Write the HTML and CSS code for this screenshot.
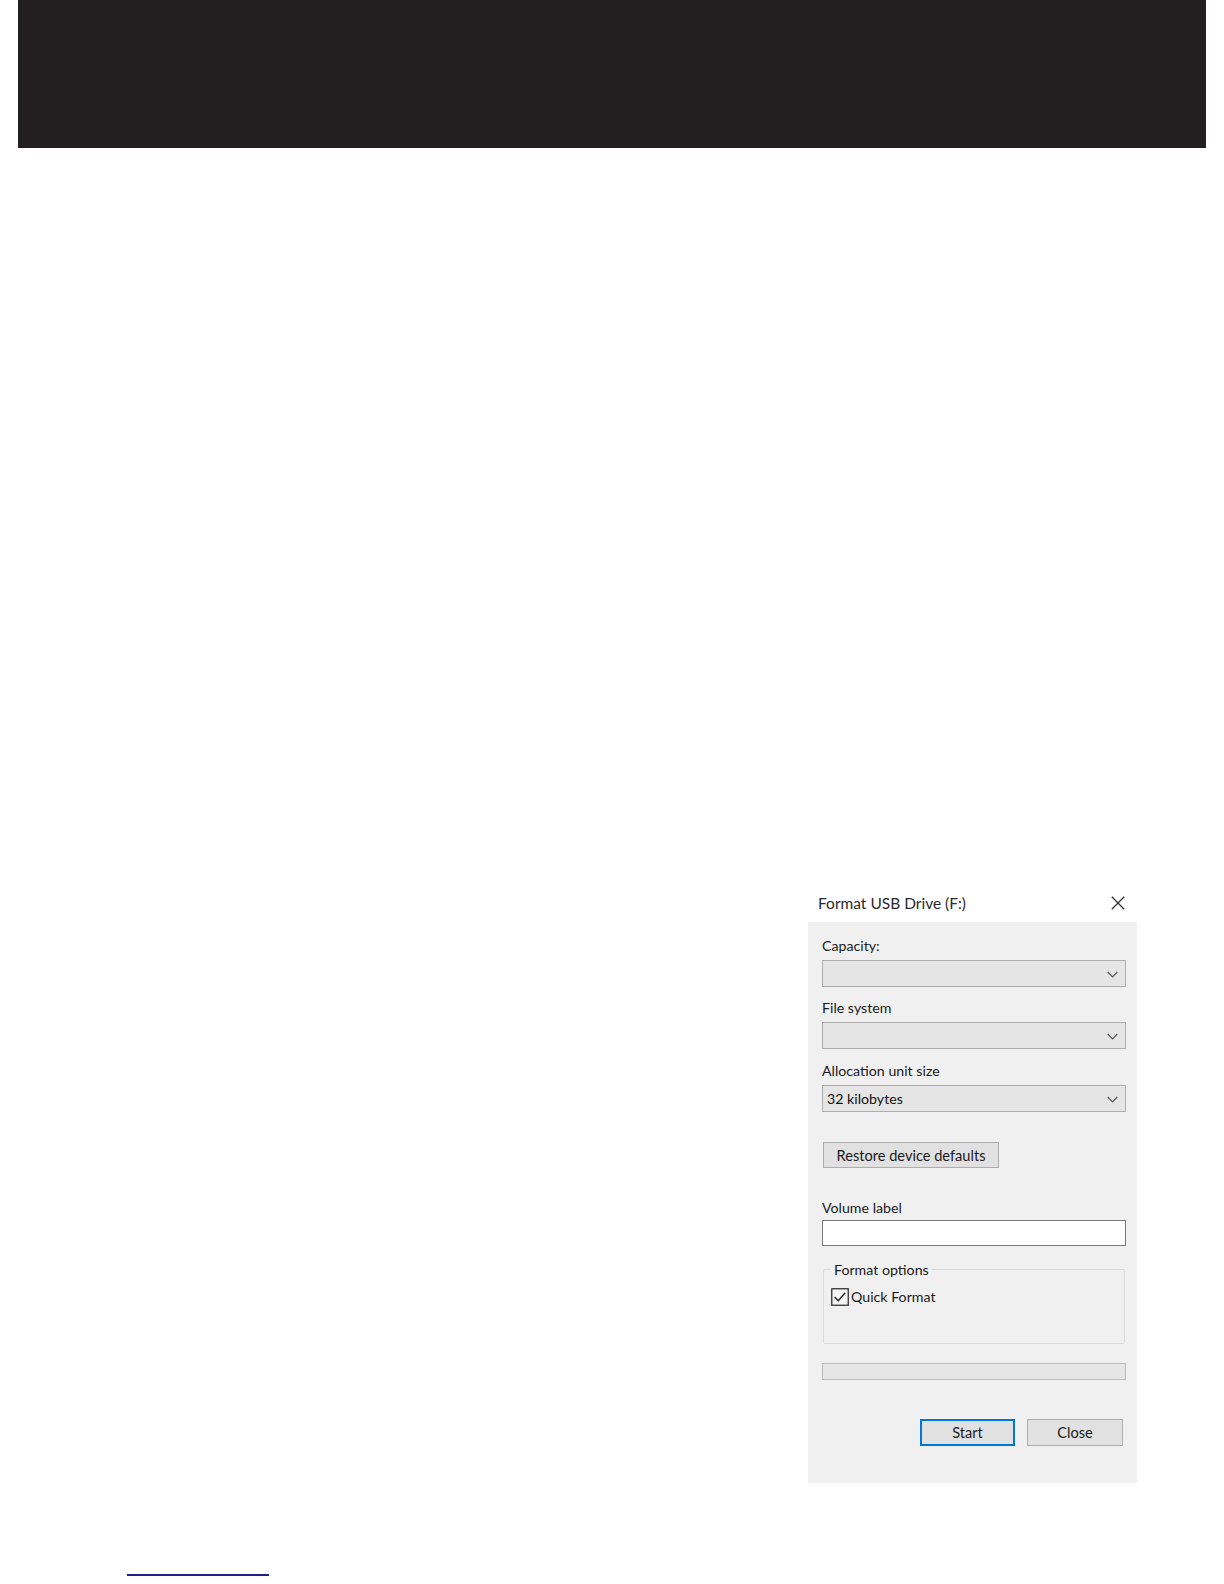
FILE: index.html
```html
<!DOCTYPE html>
<html lang="en">
<head>
<meta charset="utf-8">
<title>Format USB Drive</title>
<link rel="stylesheet" href="styles.css">
</head>
<body>
<div class="header"></div>
<main class="stage">
  <div class="dialog">
    <div class="titlebar">
      <span class="title">Format USB Drive (F:)</span>
      <svg class="close-x" width="14" height="14" viewBox="0 0 14 14"><path d="M0.8 0.8 L13.2 13.2 M13.2 0.8 L0.8 13.2" stroke="#333" stroke-width="1.3" fill="none"/></svg>
    </div>
    <div class="panel">
      <div class="label first">Capacity:</div>
      <div class="select"><span class="select-text"></span><svg class="chev" width="11" height="7" viewBox="0 0 11 7"><path d="M0.7 1 L5.5 5.8 L10.3 1" stroke="#555" stroke-width="1.2" fill="none"/></svg></div>
      <div class="label">File system</div>
      <div class="select"><span class="select-text"></span><svg class="chev" width="11" height="7" viewBox="0 0 11 7"><path d="M0.7 1 L5.5 5.8 L10.3 1" stroke="#555" stroke-width="1.2" fill="none"/></svg></div>
      <div class="label alloc">Allocation unit size</div>
      <div class="select"><span class="select-text">32 kilobytes</span><svg class="chev" width="11" height="7" viewBox="0 0 11 7"><path d="M0.7 1 L5.5 5.8 L10.3 1" stroke="#555" stroke-width="1.2" fill="none"/></svg></div>
      <div class="btn restore">Restore device defaults</div>
      <div class="label vol">Volume label</div>
      <div class="input"></div>
      <div class="group">
        <span class="legend">Format options</span>
        <div class="check-row">
          <svg class="checkbox" width="18" height="18" viewBox="0 0 18 18"><rect x="0.75" y="0.75" width="16.5" height="16.5" fill="#f5f5f5" stroke="#333" stroke-width="1.3"/><path d="M3.6 9 L7.3 12.8 L14.2 4.8" stroke="#222" stroke-width="1.4" fill="none"/></svg>
          <span class="check-label">Quick Format</span>
        </div>
      </div>
      <div class="progress"></div>
      <div class="actions">
        <div class="btn primary">Start</div>
        <div class="btn">Close</div>
      </div>
    </div>
  </div>
  <div class="footnote-rule"></div>
</main>
</body>
</html>
```
FILE: styles.css
```css
html, body {
  margin: 0;
  padding: 0;
  background: #ffffff;
}
body {
  font-family: "Lato", "Noto Sans", sans-serif;
  color: #1a1a1a;
}
.header {
  height: 148px;
  margin: 0 18px;
  background: #231f20;
}
.stage {
  display: flex;
  flex-direction: column;
  padding-top: 736px;
}
.dialog {
  margin-left: 808px;
  width: 329px;
  font-size: 14.2px;
}
.titlebar {
  height: 38px;
  display: flex;
  align-items: center;
  justify-content: space-between;
  padding: 0 12px 0 10px;
  background: #ffffff;
}
.title {
  color: #2a2a2a;
  font-size: 15.5px;
}
.panel {
  background: #f0f0f0;
  height: 561px;
  box-sizing: border-box;
  padding: 15px 11px 0 14px;
  display: flex;
  flex-direction: column;
}
.label {
  height: 18px;
  line-height: 18px;
  margin-top: 12px;
  margin-bottom: 5px;
}
.label.first {
  margin-top: 0;
}
.label.alloc {
  margin-top: 13px;
}
.label.vol {
  margin-top: 31px;
  margin-bottom: 3px;
}
.select {
  height: 27px;
  box-sizing: border-box;
  border: 1px solid #adadad;
  background: #e5e5e5;
  display: flex;
  align-items: center;
  justify-content: space-between;
  padding: 0 7px 0 4px;
}
.select-text {
  color: #111;
}
.chev {
  margin-top: 1px;
}
.btn {
  height: 26px;
  box-sizing: border-box;
  border: 1px solid #adadad;
  background: #e1e1e1;
  display: flex;
  align-items: center;
  justify-content: center;
  color: #1a1a1a;
  font-size: 14.6px;
}
.btn.restore {
  align-self: flex-start;
  width: 176px;
  margin-top: 30px;
  margin-left: 1px;
}
.input {
  height: 26px;
  box-sizing: border-box;
  border: 1px solid #7a7a7a;
  background: #ffffff;
}
.group {
  position: relative;
  margin-top: 23px;
  margin-left: 1px;
  margin-right: 1px;
  height: 75px;
  box-sizing: border-box;
  border: 1px solid #dcdcdc;
  border-radius: 2px;
  padding: 18px 0 0 7px;
}
.legend {
  position: absolute;
  top: -9px;
  left: 7px;
  padding: 0 3px;
  background: #f0f0f0;
  line-height: 18px;
}
.check-row {
  display: flex;
  align-items: center;
  gap: 2px;
}
.check-label {
  line-height: 18px;
}
.progress {
  margin-top: 19px;
  height: 17px;
  box-sizing: border-box;
  border: 1px solid #bcbcbc;
  background: #e6e6e6;
}
.actions {
  display: flex;
  justify-content: flex-end;
  gap: 12px;
  margin-top: 39px;
  padding-right: 3px;
}
.actions .btn {
  width: 96px;
  height: 27px;
}
.actions .btn.primary {
  width: 95px;
  border: 2px solid #0078d7;
}
.footnote-rule {
  margin-top: 91px;
  margin-left: 127px;
  width: 142px;
  height: 2px;
  background: #1c1f8c;
}
```
